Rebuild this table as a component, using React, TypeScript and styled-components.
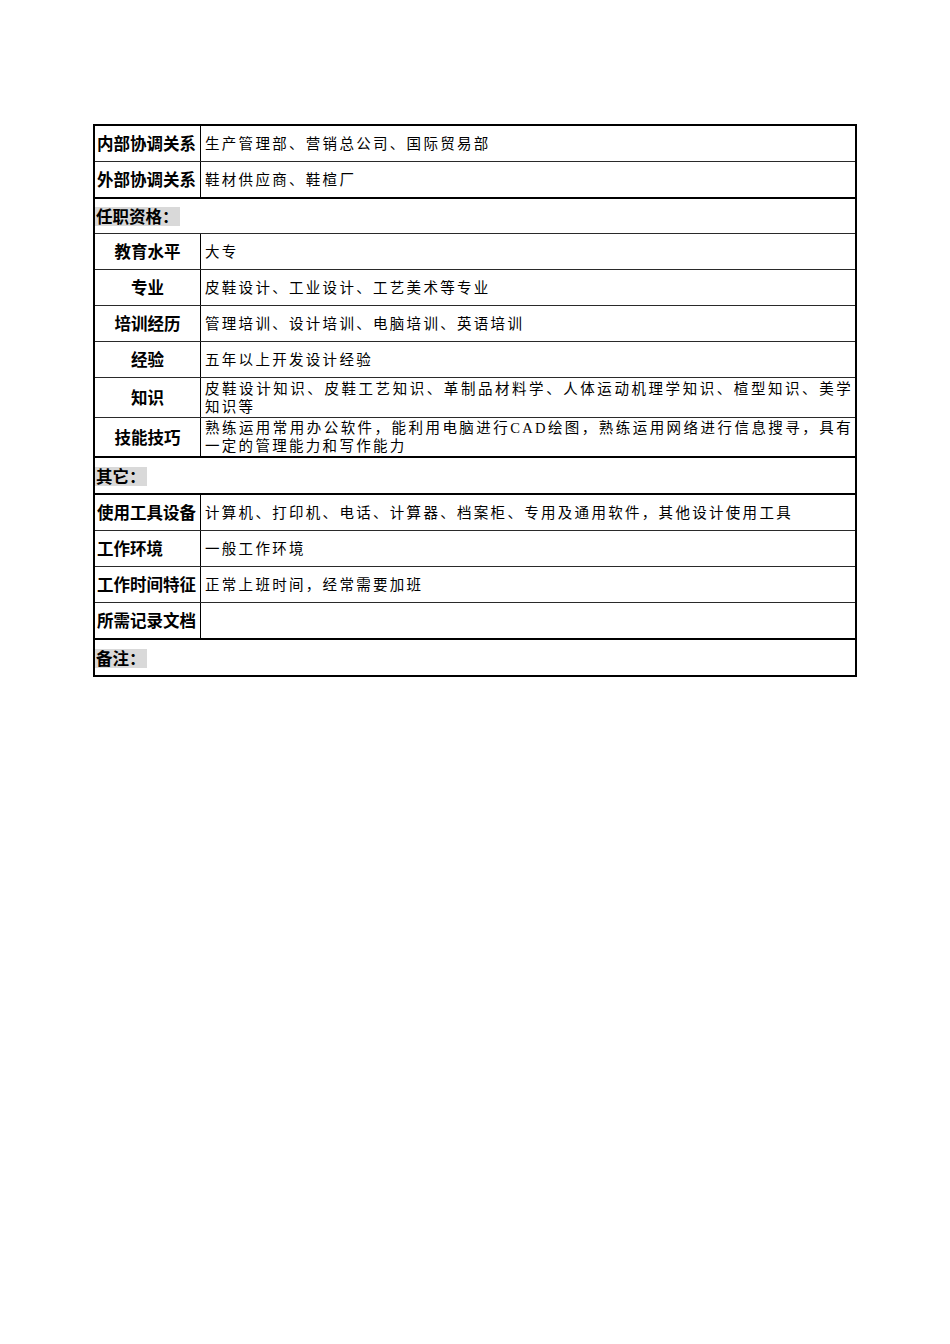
import styled, { createGlobalStyle } from "styled-components";

type Line =
  | { kind: "pair"; label: string; value: string; h: number; center?: boolean; thick?: boolean }
  | { kind: "section"; title: string; h: number; thick?: boolean };

const rows: Line[] = [
  { kind: "pair", label: "内部协调关系", value: "生产管理部、营销总公司、国际贸易部", h: 36 },
  { kind: "pair", label: "外部协调关系", value: "鞋材供应商、鞋楦厂", h: 37, thick: true },
  { kind: "section", title: "任职资格：", h: 35 },
  { kind: "pair", label: "教育水平", value: "大专", h: 36, center: true },
  { kind: "pair", label: "专业", value: "皮鞋设计、工业设计、工艺美术等专业", h: 36, center: true },
  { kind: "pair", label: "培训经历", value: "管理培训、设计培训、电脑培训、英语培训", h: 36, center: true },
  { kind: "pair", label: "经验", value: "五年以上开发设计经验", h: 36, center: true },
  {
    kind: "pair",
    label: "知识",
    value: "皮鞋设计知识、皮鞋工艺知识、革制品材料学、人体运动机理学知识、楦型知识、美学知识等",
    h: 40,
    center: true,
  },
  {
    kind: "pair",
    label: "技能技巧",
    value: "熟练运用常用办公软件，能利用电脑进行CAD绘图，熟练运用网络进行信息搜寻，具有一定的管理能力和写作能力",
    h: 40,
    center: true,
    thick: true,
  },
  { kind: "section", title: "其它：", h: 37, thick: true },
  {
    kind: "pair",
    label: "使用工具设备",
    value: "计算机、打印机、电话、计算器、档案柜、专用及通用软件，其他设计使用工具",
    h: 36,
  },
  { kind: "pair", label: "工作环境", value: "一般工作环境", h: 36 },
  { kind: "pair", label: "工作时间特征", value: "正常上班时间，经常需要加班", h: 36 },
  { kind: "pair", label: "所需记录文档", value: "", h: 37, thick: true },
  { kind: "section", title: "备注：", h: 35 },
];

function App() {
  return (
    <>
      <GlobalStyle />
      <Page>
        <Sheet>
          {rows.map((row, i) => {
            const last = i === rows.length - 1;
            if (row.kind === "section") {
              return (
                <Row key={i} $h={row.h} $thick={row.thick} $last={last}>
                  <Section>
                    <Mark>{row.title}</Mark>
                  </Section>
                </Row>
              );
            }
            return (
              <Row key={i} $h={row.h} $thick={row.thick} $last={last}>
                <Label $center={row.center}>{row.label}</Label>
                <Value>
                  <Text>{row.value}</Text>
                </Value>
              </Row>
            );
          })}
        </Sheet>
      </Page>
    </>
  );
}

const GlobalStyle = createGlobalStyle`
  html, body {
    margin: 0;
    background: #fff;
  }
  body {
    font-family: "Noto Sans CJK SC", sans-serif;
    color: #000;
  }
`;

const Page = styled.div`
  width: 950px;
  height: 1344px;
  box-sizing: border-box;
  padding: 124px 0 0 93px;
`;

const Sheet = styled.div`
  width: 764px;
  box-sizing: border-box;
  border: 2px solid #000;
  display: flex;
  flex-direction: column;
`;

const Row = styled.div<{ $h: number; $thick?: boolean; $last?: boolean }>`
  display: flex;
  height: ${(p) => p.$h}px;
  box-sizing: border-box;
  border-bottom: ${(p) => (p.$last ? "none" : p.$thick ? "2px solid #000" : "1px solid #2a2a2a")};
`;

const Label = styled.div<{ $center?: boolean }>`
  flex: 0 0 106px;
  box-sizing: border-box;
  border-right: 1px solid #000;
  display: flex;
  align-items: center;
  justify-content: ${(p) => (p.$center ? "center" : "flex-start")};
  padding-left: ${(p) => (p.$center ? 0 : 2)}px;
  font: 700 16.5px/1 "Noto Sans CJK SC", sans-serif;
  white-space: nowrap;
`;

const Value = styled.div`
  flex: 1;
  min-width: 0;
  display: flex;
  align-items: center;
  padding: 0 2px 0 4px;
`;

const Text = styled.p`
  flex: 1;
  margin: 0;
  font: 400 14.5px/18px "Liberation Serif", "Noto Sans CJK SC", serif;
  letter-spacing: 2.3px;
  text-align: justify;
`;

const Section = styled.div`
  flex: 1;
  display: flex;
  align-items: center;
  padding-top: 1px;
`;

const Mark = styled.span`
  display: inline-block;
  background: #d9d9d9;
  padding: 0 1px;
  font: 700 16.5px/19px "Noto Sans CJK SC", sans-serif;
`;

export default App;
